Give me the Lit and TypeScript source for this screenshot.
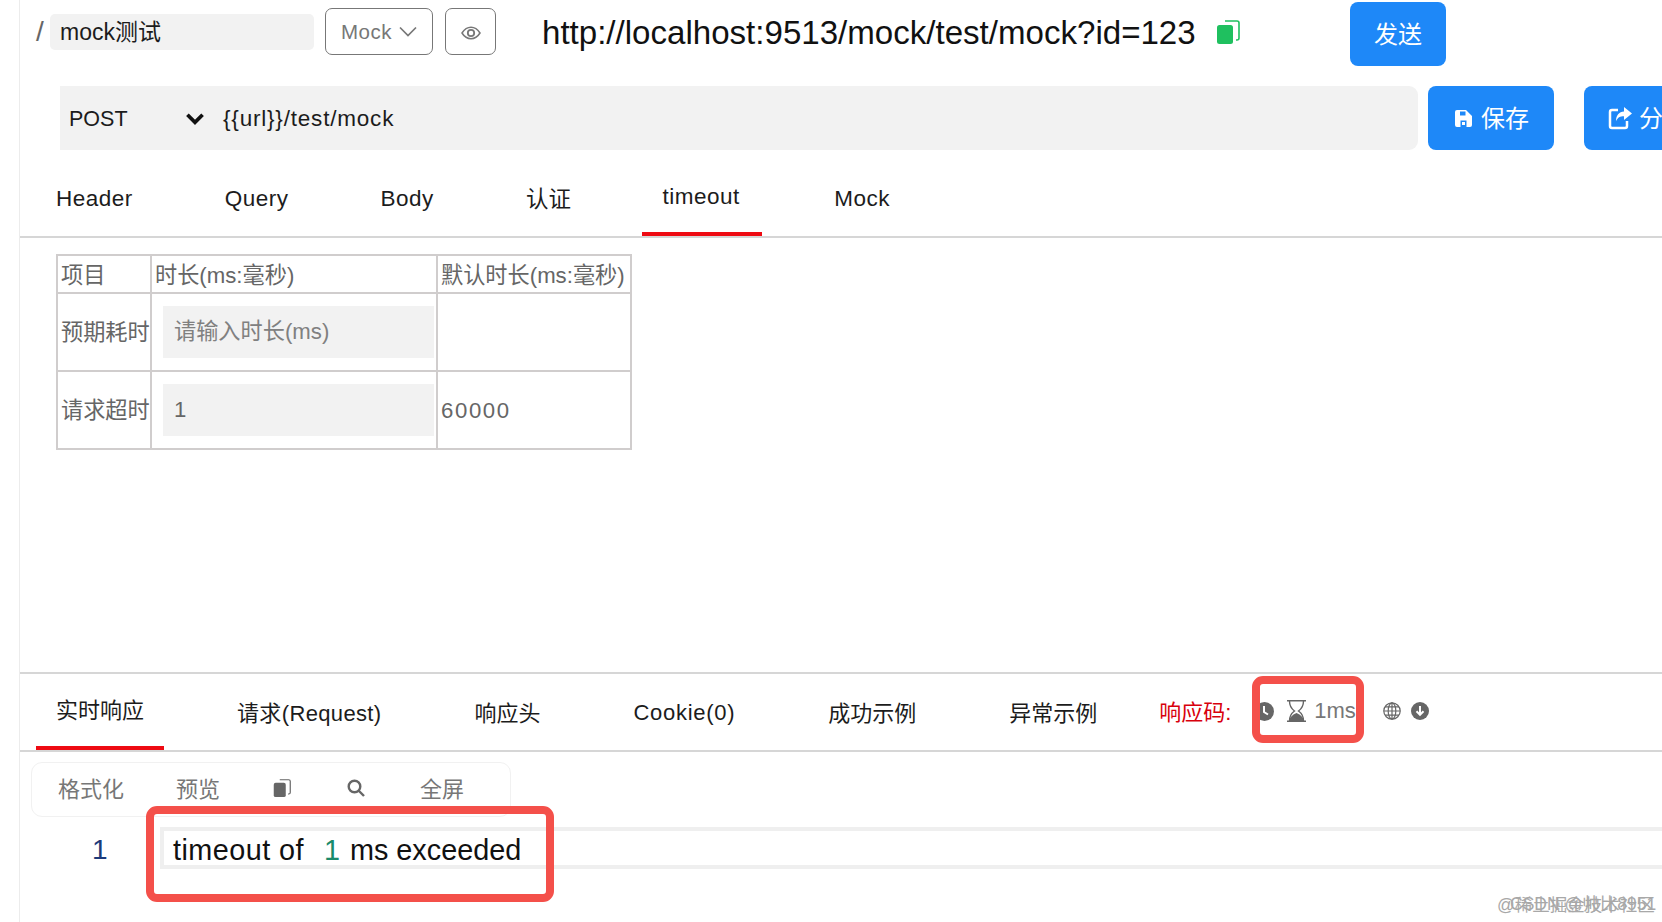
import { LitElement, html, css, unsafeCSS } from "lit";
import { customElement } from "lit/decorators.js";

const FONT = unsafeCSS(`"Liberation Sans", "Noto Sans CJK SC", sans-serif`);

const copyIcon = (c: string, w: number, h: number) => html`<svg width=${w} height=${h} viewBox="0 0 24 24">
  <path d="M9 1h12a2 2 0 0 1 2 2v15a2 2 0 0 1-2 2h-1" fill="none" stroke=${c} stroke-width="1.6" />
  <rect x="1" y="5" width="16" height="19" rx="2.5" fill=${c} />
</svg>`;

@customElement("app-root")
export class AppRoot extends LitElement {
  static styles = css`
    :host { display: block; width: 1662px; height: 922px; overflow: hidden; font-family: ${FONT}; color: #1c1c1c; background: #fff; }
    .page { position: relative; width: 1662px; height: 922px; overflow: hidden; }
    .main { margin-left: 19px; width: 1643px; height: 922px; border-left: 1px solid #ececec; box-sizing: border-box; }

    .top { display: flex; height: 86px; align-items: flex-start; }
    .slash { margin: 16px 0 0 16px; width: 14px; font-size: 28px; color: #666; }
    .name { margin-top: 14px; width: 264px; height: 36px; background: #f2f2f2; border-radius: 5px; font-size: 23px; line-height: 36px; padding-left: 10px; box-sizing: border-box; }
    .mode { margin: 8px 0 0 11px; width: 108px; height: 47px; box-sizing: border-box; border: 1.5px solid #777; border-radius: 7px; display: flex; align-items: center; justify-content: center; gap: 7px; color: #777; font-size: 20.5px; letter-spacing: 0.5px; }
    .eye { margin: 8px 0 0 12px; width: 51px; height: 47px; box-sizing: border-box; border: 1.5px solid #777; border-radius: 7px; display: flex; align-items: center; justify-content: center; padding-top: 3px; }
    .url { margin: 10px 0 0 46px; width: 654px; font-size: 33.1px; line-height: 46px; white-space: nowrap; color: #111; }
    .url-copy { margin: 20px 0 0 20px; width: 24px; height: 24px; display: block; }
    .send { margin: 2px 0 0 110px; width: 96px; height: 64px; border-radius: 8px; background: #1e88f8; color: #fff; font-size: 24px; display: flex; align-items: center; justify-content: center; padding-bottom: 4px; box-sizing: border-box; }

    .req { display: flex; height: 64px; padding-left: 40px; }
    .bar { flex: none; width: 1358px; height: 64px; background: #f2f2f2; border-radius: 0 9px 9px 0; display: flex; align-items: center; box-sizing: border-box; padding-left: 9px; }
    .method { width: 116px; font-size: 21.5px; padding-top: 3px; }
    .chev { width: 20px; display: block; }
    .path { margin-left: 18px; font-size: 22.5px; letter-spacing: 0.8px; padding-top: 1px; }
    .btn { height: 64px; background: #1e88f8; border-radius: 8px; color: #fff; font-size: 24px; display: flex; align-items: center; flex: none; box-sizing: border-box; padding-bottom: 3px; }
    .btn svg { margin-top: 3px; }
    .save { width: 126px; margin-left: 10px; padding-left: 26px; gap: 8px; }
    .share { width: 120px; margin-left: 30px; padding-left: 24px; gap: 7px; }

    .tabs { display: flex; border-bottom: 2px solid #d6d6d6; box-sizing: border-box; padding-left: 16px; }
    .tabs.one { height: 88px; gap: 52px; }
    .tabs.two { height: 80px; border-top: 2px solid #d6d6d6; gap: 53px; }
    .tab { padding: 0 20px; display: flex; align-items: center; white-space: nowrap; height: 100%; box-sizing: border-box; color: #1c1c1c; }
    .one .tab { font-size: 22.5px; letter-spacing: 0.5px; padding-top: 12px; }
    .one .tab.cjk { padding-top: 8px; letter-spacing: 0; }
    .one .tab.on { padding: 12px 22.5px 0 20.5px; margin: 0 0 0 -1px; border-bottom: 4px solid #ee0a12; }
    .two .tab { font-size: 22px; padding-bottom: 2px; }
    .two .tab.request { letter-spacing: 0.35px; }
    .two .tab.cookie { letter-spacing: 0.7px; padding-top: 4px; }
    .two .tab.on { padding-bottom: 4px; border-bottom: 4px solid #ee0a12; }

    .status { margin-left: -11px; display: flex; align-items: center; padding-bottom: 2px; }
    .code { color: #d8000c; width: 96px; white-space: nowrap; font-size: 22px; padding-bottom: 2px; }
    .stat { display: flex; align-items: center; color: #777; font-size: 22px; }
    .hour { margin-left: 13px; margin-right: 8px; display: block; }
    .globe { margin-left: 27.5px; display: block; }
    .down { margin-left: 10px; display: block; }

    .mid { height: 434px; padding: 16px 0 0 36px; box-sizing: border-box; }
    table { border-collapse: collapse; table-layout: fixed; width: 574px; color: #666; font-size: 22.2px; }
    td { border: 2px solid #d0cdcd; padding: 0 0 0 3px; white-space: nowrap; box-sizing: border-box; overflow: hidden; }
    tr.h { height: 38px; }
    tr.h td { padding-bottom: 3px; }
    tr.r { height: 78px; }
    td.label { padding-bottom: 4px; }
    td.num-cell { padding-top: 2px; letter-spacing: 1.6px; }
    .c1 { width: 94px; }
    .c2 { width: 286px; }
    .c3 { width: 194px; }
    input { display: block; width: 271px; height: 52px; border: 0; outline: 0; background: #f2f2f2; padding: 0 0 0 11px; box-sizing: border-box; font: inherit; color: #666; }
    input::placeholder { color: #808080; opacity: 1; }
    td.has-input { padding-left: 11px; }

    .tools { margin: 10px 0 0 11px; width: 480px; height: 55px; box-sizing: border-box; border: 1px solid #f1f1f1; border-radius: 11px; display: flex; align-items: center; padding: 0 0 5px 26px; color: #777; font-size: 22px; }
    .t1 { width: 118px; }
    .t2 { width: 97px; }
    .t3 { width: 74px; display: block; padding-top: 5px; }
    .t4 { width: 72px; margin-left: -1px; }
    .line { display: flex; margin-top: 10px; height: 42px; }
    .num { width: 140px; padding-left: 72px; box-sizing: border-box; font-size: 28px; line-height: 46px; color: #1c3a7a; }
    .src { flex: 1; display: flex; border: solid #efefef; border-width: 4px 0 4px 4px; box-sizing: border-box; font-size: 28.8px; line-height: 38px; padding-left: 9px; white-space: pre; color: #111; }
    .src .a1 { letter-spacing: 0.45px; }
    .src b { font-weight: 400; color: #1a8a6a; margin: 0 10px 0 20px; }

    .mark { position: absolute; border: 8px solid #f4504a; border-radius: 11px; box-sizing: border-box; pointer-events: none; }
    .mark.a { left: 1252px; top: 676px; width: 112px; height: 67px; }
    .mark.b { left: 146px; top: 806px; width: 408px; height: 96px; }
    .wm { position: absolute; font-size: 17.5px; color: #a8a8a8; white-space: nowrap; }
    .wm.w1 { left: 1497px; top: 891px; }
    .wm.w2 { left: 1510px; top: 890px; }
  `;

  render() {
    const tabs1 = [
      { t: "Header", c: "" },
      { t: "Query", c: "" },
      { t: "Body", c: "" },
      { t: "认证", c: "cjk" },
      { t: "timeout", c: "on" },
      { t: "Mock", c: "" },
    ];
    const tabs2 = [
      { t: "实时响应", c: "on" },
      { t: "请求(Request)", c: "request" },
      { t: "响应头", c: "" },
      { t: "Cookie(0)", c: "cookie" },
      { t: "成功示例", c: "" },
      { t: "异常示例", c: "" },
    ];
    return html`<div class="page">
      <div class="main">
        <div class="top">
          <span class="slash">/</span>
          <div class="name">mock测试</div>
          <div class="mode">Mock
            <svg width="18" height="11" viewBox="0 0 18 11"><path d="M1 1.500 9 9.500 17 1.500" fill="none" stroke="#777" stroke-width="1.700"/></svg>
          </div>
          <div class="eye">
            <svg width="20" height="14" viewBox="0 0 20 14"><path d="M1 7C3.500 3 6.500 1.200 10 1.200S16.500 3 19 7c-2.500 4-5.500 5.800-9 5.800S3.500 11 1 7Z" fill="none" stroke="#777" stroke-width="1.500"/><circle cx="10" cy="7" r="3.200" fill="none" stroke="#777" stroke-width="1.800"/></svg>
          </div>
          <div class="url">http://localhost:9513/mock/test/mock?id=123</div>
          <span class="url-copy">${copyIcon("#1fc05f", 24, 24)}</span>
          <div class="send">发送</div>
        </div>

        <div class="req">
          <div class="bar">
            <span class="method">POST</span>
            <svg class="chev" width="20" height="13" viewBox="0 0 18 12"><path d="M2 2.500 9 9.500 16 2.500" fill="none" stroke="#111" stroke-width="3.400"/></svg>
            <span class="path">{{url}}/test/mock</span>
          </div>
          <div class="btn save">
            <svg width="19" height="19" viewBox="0 0 19 19"><path fill-rule="evenodd" d="M3 1h9l6 6v9a2 2 0 0 1-2 2H3a2 2 0 0 1-2-2V3a2 2 0 0 1 2-2ZM6 2.500v4h5.500v-4ZM6.500 11.500h6V18h-6Z" fill="#fff"/><rect x="8" y="13" width="3" height="3" fill="#fff"/></svg>
            保存
          </div>
          <div class="btn share">
            <svg width="24" height="23" viewBox="0 0 24 23"><path d="M10 3H4a2 2 0 0 0-2 2v14a2 2 0 0 0 2 2h13a2 2 0 0 0 2-2v-5" fill="none" stroke="#fff" stroke-width="2.500"/><path d="M16 0l8 6.500-8 6.500V9.200c-4 0-6.500 1.300-8 5 0-6 3-9.500 8-9.800Z" fill="#fff"/></svg>
            分享
          </div>
        </div>

        <div class="tabs one">
          ${tabs1.map((x) => html`<div class="tab ${x.c}">${x.t}</div>`)}
        </div>

        <div class="mid">
          <table>
            <colgroup><col class="c1" /><col class="c2" /><col class="c3" /></colgroup>
            <tr class="h"><td>项目</td><td>时长(ms:毫秒)</td><td>默认时长(ms:毫秒)</td></tr>
            <tr class="r"><td class="label">预期耗时</td><td class="has-input"><input placeholder="请输入时长(ms)" /></td><td></td></tr>
            <tr class="r"><td class="label">请求超时</td><td class="has-input"><input .value=${"1"} /></td><td class="num-cell">60000</td></tr>
          </table>
        </div>

        <div class="tabs two">
          ${tabs2.map((x) => html`<div class="tab ${x.c}">${x.t}</div>`)}
          <div class="status">
            <span class="code">响应码:</span>
            <span class="stat">
              <svg width="19" height="19" viewBox="0 0 19 19"><circle cx="9.500" cy="9.500" r="9.500" fill="#666"/><path d="M9 4v6l4 2.500" fill="none" stroke="#fff" stroke-width="2"/></svg>
              <svg class="hour" width="19" height="22" viewBox="0 0 19 22"><path d="M0 .7h19M0 21.300h19" stroke="#666" stroke-width="1.400"/><path d="M2.500 1c0 5 1.500 7.500 5 10-3.500 2.500-5 5-5 10M16.500 1c0 5-1.500 7.500-5 10 3.500 2.500 5 5 5 10" fill="none" stroke="#666" stroke-width="1.400"/><path d="M2 21c.5-3.500 3-6 7.500-8 4.500 2 7 4.500 7.500 8Z" fill="#666"/></svg>
              1ms
            </span>
            <svg class="globe" width="18" height="18" viewBox="0 0 18 18" fill="none" stroke="#666" stroke-width="1.200"><circle cx="9" cy="9" r="8.200"/><ellipse cx="9" cy="9" rx="3.800" ry="8.200"/><path d="M9 .8v16.400M.8 9h16.400M2 4.800h14M2 13.200h14"/></svg>
            <svg class="down" width="18" height="18" viewBox="0 0 18 18"><circle cx="9" cy="9" r="9" fill="#666"/><path d="M9 4v8.500M5.500 9.200 9 12.800l3.500-3.600" fill="none" stroke="#fff" stroke-width="2"/></svg>
          </div>
        </div>

        <div class="tools">
          <span class="t1">格式化</span>
          <span class="t2">预览</span>
          <span class="t3">${copyIcon("#666", 18, 18)}</span>
          <span class="t3"><svg width="18" height="18" viewBox="0 0 18 18"><g fill="none" stroke="#666" stroke-width="2.400"><circle cx="7.500" cy="7.500" r="5.800"/><path d="M11.500 11.500l5.500 5.500"/></g></svg></span>
          <span class="t4">全屏</span>
        </div>

        <div class="line">
          <div class="num">1</div>
          <div class="src"><span class="a1">timeout of</span><b>1</b><span>ms exceeded</span></div>
        </div>
      </div>

      <div class="mark a"></div>
      <div class="mark b"></div>
      <span class="wm w1">@稀土掘金技术社区</span>
      <span class="wm w2">CSDN @帅比8951</span>
    </div>`;
  }
}
